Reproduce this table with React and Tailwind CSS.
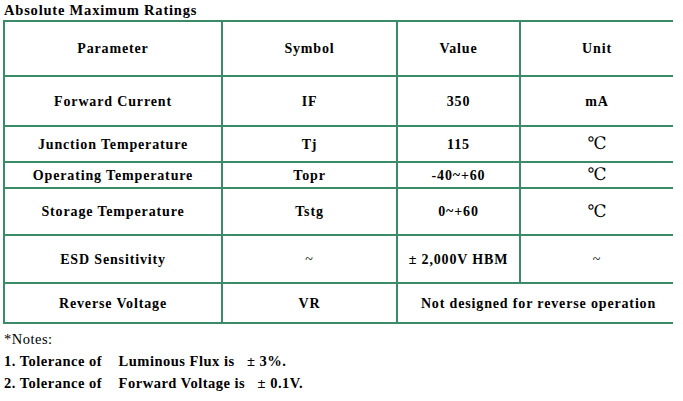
import React from 'react';

const rows = [
  { h: 'h-[50px]', param: 'Forward Current', sym: 'IF', val: '350', unit: 'mA' },
  { h: 'h-[36px]', param: 'Junction Temperature', sym: 'Tj', val: '115', unit: '℃' },
  { h: 'h-[26px]', param: 'Operating Temperature', sym: 'Topr', val: '-40~+60', unit: '℃' },
  { h: 'h-[47px]', param: 'Storage Temperature', sym: 'Tstg', val: '0~+60', unit: '℃' },
  { h: 'h-[48px]', param: 'ESD Sensitivity', sym: '~', val: '± 2,000V HBM', unit: '~' },
];

const cell = 'flex items-center justify-center border-b-2 border-[#3b8a68]';

export default function App() {
  return (
    <div className="w-[683px] h-[401px] bg-white text-black font-[family-name:'Liberation_Serif',serif] text-[14px] font-bold">
      <div className="h-[20px] pl-[4px] pt-[1px] leading-[18px] text-[14.5px] tracking-[0.8px]">Absolute Maximum Ratings</div>

      <div className="ml-[3px] w-[670px] border-l-2 border-t-2 border-[#3b8a68] grid grid-cols-[218px_175px_123px_152px] tracking-[0.85px]">
        <div className={`${cell} border-r-2 h-[55px]`}>Parameter</div>
        <div className={`${cell} border-r-2 h-[55px]`}>Symbol</div>
        <div className={`${cell} border-r-2 h-[55px]`}>Value</div>
        <div className={`${cell} h-[55px]`}>Unit</div>

        {rows.map((r) => (
          <React.Fragment key={r.param}>
            <div className={`${cell} border-r-2 ${r.h}`}>{r.param}</div>
            <div className={`${cell} border-r-2 ${r.h} ${r.sym === '~' ? 'font-normal' : ''}`}>{r.sym}</div>
            <div className={`${cell} border-r-2 ${r.h}`}>{r.val}</div>
            <div className={`${cell} ${r.h} ${r.unit === 'mA' ? '' : 'font-normal'} ${r.unit === '℃' ? "text-[17px] tracking-normal font-[family-name:'DejaVu_Serif',serif]" : ''}`}>{r.unit}</div>
          </React.Fragment>
        ))}

        <div className={`${cell} border-r-2 h-[40px]`}>Reverse Voltage</div>
        <div className={`${cell} border-r-2 h-[40px]`}>VR</div>
        <div className={`${cell} col-span-2 h-[40px] pl-[6px]`}>Not designed for reverse operation</div>
      </div>

      <div className="pl-[4px] pt-[4px] leading-[22px] text-[14.5px] tracking-[0.5px]">
        <div className="font-normal">*Notes:</div>
        <div>1. Tolerance of&nbsp;&nbsp;&nbsp; Luminous Flux is&nbsp;&nbsp; ± 3%.</div>
        <div>2. Tolerance of&nbsp;&nbsp;&nbsp; Forward Voltage is&nbsp;&nbsp; ± 0.1V.</div>
      </div>
    </div>
  );
}
